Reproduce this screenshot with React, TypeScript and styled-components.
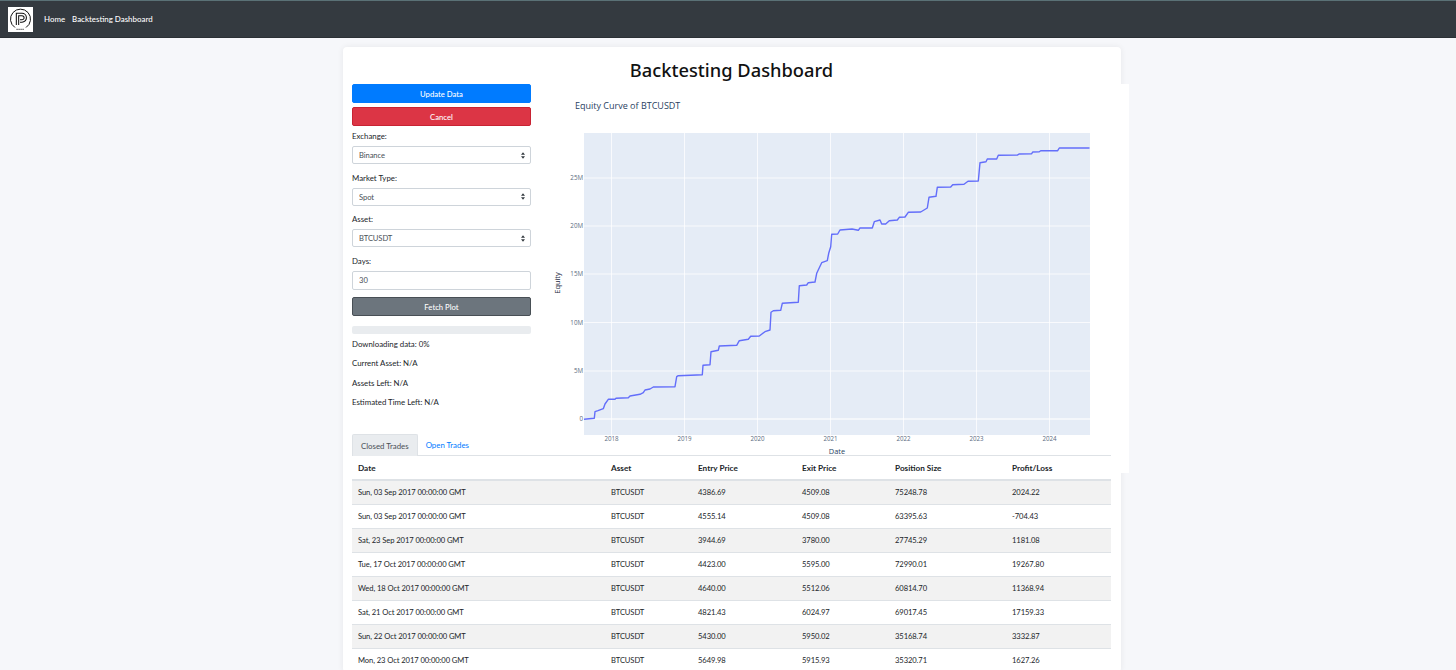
import styled, { createGlobalStyle } from "styled-components";

const GlobalStyle = createGlobalStyle`
    html, body {
        margin: 0;
        height: 100%;
        overflow: hidden;
    }
    body {
        background: #f6f7fa;
        color: #212529;
        font-family: Lato, "Noto Sans", "Liberation Sans", sans-serif;
        font-size: 7.85px;
    }
`;

const Navbar = styled.nav`
    height: 38px;
    box-sizing: border-box;
    display: flex;
    align-items: center;
    gap: 11px;
    padding: 0 8px;
    background: #343a40;
    border-top: 1px solid #5a7176;
    border-bottom: 1px solid #2b3035;
`;

const LogoBox = styled.div`
    width: 25px;
    height: 25px;
    background: #fff;
    flex-shrink: 0;
`;

const NavLinks = styled.div`
    display: flex;
    gap: 7px;
`;

const NavLink = styled.a`
    color: #fff;
    font-size: 7.9px;
    font-weight: 500;
`;

const Card = styled.main`
    width: 778px;
    box-sizing: border-box;
    margin: 9px 0 0 343px;
    padding: 0 10px 0 9px;
    background: #fff;
    border-radius: 4px;
    box-shadow: 0 0 6px rgba(0, 0, 0, 0.07);
`;

const Title = styled.h1`
    margin: 0;
    height: 37px;
    padding-top: 2px;
    box-sizing: border-box;
    line-height: 42px;
    text-align: center;
    font-family: "Noto Sans", sans-serif;
    font-size: 18.3px;
    font-weight: 500;
    color: #111;
`;

const TopRow = styled.div`
    display: flex;
    gap: 9px;
    height: 350px;
`;

const Sidebar = styled.div`
    width: 179px;
    flex-shrink: 0;
`;

const ActionButton = styled.button<{ $bg: string; $edge: string }>`
    display: block;
    width: 100%;
    height: 19px;
    padding: 0;
    margin-bottom: 4px;
    box-sizing: border-box;
    background: ${(props) => props.$bg};
    border: 1px solid ${(props) => props.$edge};
    border-radius: 2px;
    color: #fff;
    font: 500 7.7px Lato, sans-serif;
`;

const Field = styled.div`
    margin-top: 3.5px;
    margin-bottom: 7.5px;
    & + & {
        margin-top: 0;
    }
`;

const Label = styled.label`
    display: block;
    height: 16px;
    line-height: 12px;
`;

const SelectWrap = styled.div`
    position: relative;
`;

const Select = styled.select`
    display: block;
    width: 100%;
    height: 18px;
    box-sizing: border-box;
    padding: 0 6px;
    appearance: none;
    background: #fff;
    border: 1px solid #ced4da;
    border-radius: 2px;
    color: #495057;
    font: 7.6px Lato, sans-serif;
    letter-spacing: -0.08px;
`;

const Caret = styled.svg`
    position: absolute;
    right: 6.5px;
    top: 5.5px;
    width: 4px;
    height: 7px;
    pointer-events: none;
`;

const Input = styled.input`
    display: block;
    width: 100%;
    height: 19px;
    box-sizing: border-box;
    padding: 0 6px;
    background: #fff;
    border: 1px solid #ced4da;
    border-radius: 2px;
    color: #495057;
    font: 7.6px Lato, sans-serif;
`;

const ProgressTrack = styled.div`
    height: 7.5px;
    margin: 10px 0 4px;
    background: #e9ecef;
    border-radius: 2px;
`;

const StatusLine = styled.p`
    margin: 0 0 7.5px;
    line-height: 12px;
`;

const PlotColumn = styled.div`
    width: 589px;
    height: 389px;
    flex-shrink: 0;
    background: #fff;
`;

const PlotSvg = styled.svg`
    display: block;
    width: 589px;
    height: 389px;
    text {
        font-family: "Open Sans", "Noto Sans", sans-serif;
    }
`;

const TradesSection = styled.section`
    position: relative;
`;

const Tabs = styled.div`
    display: flex;
    height: 22px;
    box-sizing: border-box;
    border-bottom: 1px solid #dee2e6;
`;

const Tab = styled.a<{ $active?: boolean }>`
    display: flex;
    align-items: center;
    height: 22px;
    box-sizing: border-box;
    padding: 0 8px;
    border-radius: 2px 2px 0 0;
    background: ${(props) => (props.$active ? "#e9ecef" : "transparent")};
    border: ${(props) => (props.$active ? "1px solid #dee2e6" : "0")};
    border-bottom: 0;
    color: ${(props) => (props.$active ? "#495057" : "#007bff")};
`;

const Table = styled.table`
    width: 759px;
    table-layout: fixed;
    border-collapse: collapse;
    background: #fff;
`;

const Col = styled.col<{ $w: number }>`
    width: ${(props) => props.$w}px;
`;

const HeadCell = styled.th`
    height: 24px;
    box-sizing: border-box;
    padding: 0 6px;
    text-align: left;
    font-size: 8.2px;
    font-weight: 700;
    border-bottom: 2px solid #dee2e6;
`;

const Row = styled.tr`
    &:nth-child(odd) {
        background: #f2f2f2;
    }
`;

const Cell = styled.td`
    height: 24px;
    box-sizing: border-box;
    padding: 0 6px;
    font-size: 7.6px;
    letter-spacing: -0.08px;
    border-top: 1px solid #dee2e6;
`;

const trades = [
    ["Sun, 03 Sep 2017 00:00:00 GMT", "BTCUSDT", "4386.69", "4509.08", "75248.78", "2024.22"],
    ["Sun, 03 Sep 2017 00:00:00 GMT", "BTCUSDT", "4555.14", "4509.08", "63395.63", "-704.43"],
    ["Sat, 23 Sep 2017 00:00:00 GMT", "BTCUSDT", "3944.69", "3780.00", "27745.29", "1181.08"],
    ["Tue, 17 Oct 2017 00:00:00 GMT", "BTCUSDT", "4423.00", "5595.00", "72990.01", "19267.80"],
    ["Wed, 18 Oct 2017 00:00:00 GMT", "BTCUSDT", "4640.00", "5512.06", "60814.70", "11368.94"],
    ["Sat, 21 Oct 2017 00:00:00 GMT", "BTCUSDT", "4821.43", "6024.97", "69017.45", "17159.33"],
    ["Sun, 22 Oct 2017 00:00:00 GMT", "BTCUSDT", "5430.00", "5950.02", "35168.74", "3332.87"],
    ["Mon, 23 Oct 2017 00:00:00 GMT", "BTCUSDT", "5649.98", "5915.93", "35320.71", "1627.26"],
];

const columns = [253, 87, 104, 93, 117, 105];
const headers = ["Date", "Asset", "Entry Price", "Exit Price", "Position Size", "Profit/Loss"];

const yTicks = [
    { y: 419, label: "0" },
    { y: 371, label: "5M" },
    { y: 322.5, label: "10M" },
    { y: 274, label: "15M" },
    { y: 226, label: "20M" },
    { y: 178, label: "25M" },
];

const xTicks = [
    { x: 611.5, label: "2018" },
    { x: 684.5, label: "2019" },
    { x: 757.5, label: "2020" },
    { x: 830.5, label: "2021" },
    { x: 903.5, label: "2022" },
    { x: 976.5, label: "2023" },
    { x: 1049.5, label: "2024" },
];

// traced from the chart, in page coordinates (see viewBox on PlotSvg)
const curve =
    "584,419.3 594.3,418.3 595,411.7 598,410.7 603.3,408.7 605,404 608.3,399.3 615,399.3 616,398.3 628.3,397.7 630,396 640,394.3 643.3,392.7 645,390 650,389 653.3,387 675,386.7 676.7,376.7 678.3,375.7 696.7,375 702.3,374.7 703,365.3 710,364.7 711,351.7 718.3,350.3 719.3,346 736.7,345.3 739.3,340.7 748.3,339.3 750.7,336.3 759.3,336 765,331.7 770,330 771,312.3 773.3,310.7 780.7,310.3 782.3,303.3 798.3,302.3 799.3,285.7 806.7,285 808.3,282.7 815,282 816.7,273.3 821.7,262.7 827.3,260.7 828.7,253.3 830.7,246.7 831.7,234.3 837.7,234 840,230 852,229 858.3,230.3 860,228 872.3,228 874.3,221.7 880,220 881.7,224 885.7,224 889.3,220.7 897.3,220 899.3,217.3 905,217 908.3,212.3 920.7,212 927.3,208 929,197.3 936,196.3 937.3,187.3 950.7,187 952.7,184.7 964,184.3 968,181.3 978.3,181 980,162.7 986,161.7 987.3,159 996.7,159 998.3,155.3 1017.7,155 1019,154 1031.7,153.7 1032.7,152 1039.3,151.7 1040.7,150.7 1057.7,150.7 1059.3,148 1089.5,148";

const Logo = () => (
    <LogoBox>
        <svg width="25" height="25" viewBox="0 0 25 25">
            <path d="M7 20.5A10 10 0 1 1 18 20.5" fill="none" stroke="#111" strokeWidth="1" />
            <path d="M9.5 18V7.5h4.5a3 3 0 0 1 0 6.5h-2" fill="none" stroke="#111" strokeWidth="3.4" />
            <path d="M9.5 18V7.5h4.5a3 3 0 0 1 0 6.5h-2" fill="none" stroke="#fff" strokeWidth="1.3" />
            <path d="M8.5 22.3h8" stroke="#222" strokeWidth="1" strokeDasharray="1.2 .8" />
        </svg>
    </LogoBox>
);

const SelectField = ({ label, value }: { label: string; value: string }) => (
    <Field>
        <Label>{label}</Label>
        <SelectWrap>
            <Select defaultValue={value}>
                <option>{value}</option>
            </Select>
            <Caret viewBox="0 0 5 8">
                <path d="M2.5 0L5 3H0zM2.5 8L0 5h5z" fill="#343a40" />
            </Caret>
        </SelectWrap>
    </Field>
);

const EquityPlot = () => (
    <PlotColumn>
        <PlotSvg viewBox="540 84 589 389">
            <text x="575" y="108.5" fontSize="9" fill="#2a3f5f">Equity Curve of BTCUSDT</text>
            <rect x="584" y="133" width="506" height="302" fill="#e5ecf6" />
            {xTicks.map((tick) => (
                <g key={tick.label}>
                    <line x1={tick.x} x2={tick.x} y1="133" y2="435" stroke="#fff" strokeOpacity="0.75" strokeWidth="1" />
                    <text x={tick.x} y="441" fontSize="6.2" fill="#5a6a7e" textAnchor="middle">{tick.label}</text>
                </g>
            ))}
            {yTicks.map((tick) => (
                <g key={tick.label}>
                    <line x1="584" x2="1090" y1={tick.y} y2={tick.y} stroke="#fff" strokeOpacity="0.75" strokeWidth={tick.y === 419 ? 1.6 : 1} />
                    <text x="583" y={tick.y + 2.2} fontSize="6.2" fill="#5a6a7e" textAnchor="end">{tick.label}</text>
                </g>
            ))}
            <polyline points={curve} fill="none" stroke="#636efa" strokeWidth="1.4" strokeLinejoin="round" />
            <text x="837" y="454" fontSize="7.4" fill="#2a3f5f" textAnchor="middle">Date</text>
            <text x="559.5" y="283" fontSize="7.4" fill="#1f2d44" textAnchor="middle" transform="rotate(-90 559.5 283)">Equity</text>
        </PlotSvg>
    </PlotColumn>
);

export default function App() {
    return (
        <>
            <GlobalStyle />
            <Navbar>
                <Logo />
                <NavLinks>
                    <NavLink>Home</NavLink>
                    <NavLink>Backtesting Dashboard</NavLink>
                </NavLinks>
            </Navbar>
            <Card>
                <Title>Backtesting Dashboard</Title>
                <TopRow>
                    <Sidebar>
                        <ActionButton $bg="#007bff" $edge="#007bff">Update Data</ActionButton>
                        <ActionButton $bg="#dc3545" $edge="#c82333">Cancel</ActionButton>
                        <SelectField label="Exchange:" value="Binance" />
                        <SelectField label="Market Type:" value="Spot" />
                        <SelectField label="Asset:" value="BTCUSDT" />
                        <Field>
                            <Label>Days:</Label>
                            <Input defaultValue="30" />
                        </Field>
                        <ActionButton $bg="#6c757d" $edge="#484f55">Fetch Plot</ActionButton>
                        <ProgressTrack />
                        <StatusLine>Downloading data: 0%</StatusLine>
                        <StatusLine>Current Asset: N/A</StatusLine>
                        <StatusLine>Assets Left: N/A</StatusLine>
                        <StatusLine>Estimated Time Left: N/A</StatusLine>
                    </Sidebar>
                    <EquityPlot />
                </TopRow>
                <TradesSection>
                    <Tabs>
                        <Tab $active>Closed Trades</Tab>
                        <Tab>Open Trades</Tab>
                    </Tabs>
                    <Table>
                        <colgroup>
                            {columns.map((w, i) => (
                                <Col key={i} $w={w} />
                            ))}
                        </colgroup>
                        <thead>
                            <tr>
                                {headers.map((h) => (
                                    <HeadCell key={h}>{h}</HeadCell>
                                ))}
                            </tr>
                        </thead>
                        <tbody>
                            {trades.map((trade, i) => (
                                <Row key={i}>
                                    {trade.map((value, j) => (
                                        <Cell key={j}>{value}</Cell>
                                    ))}
                                </Row>
                            ))}
                        </tbody>
                    </Table>
                </TradesSection>
            </Card>
        </>
    );
}
